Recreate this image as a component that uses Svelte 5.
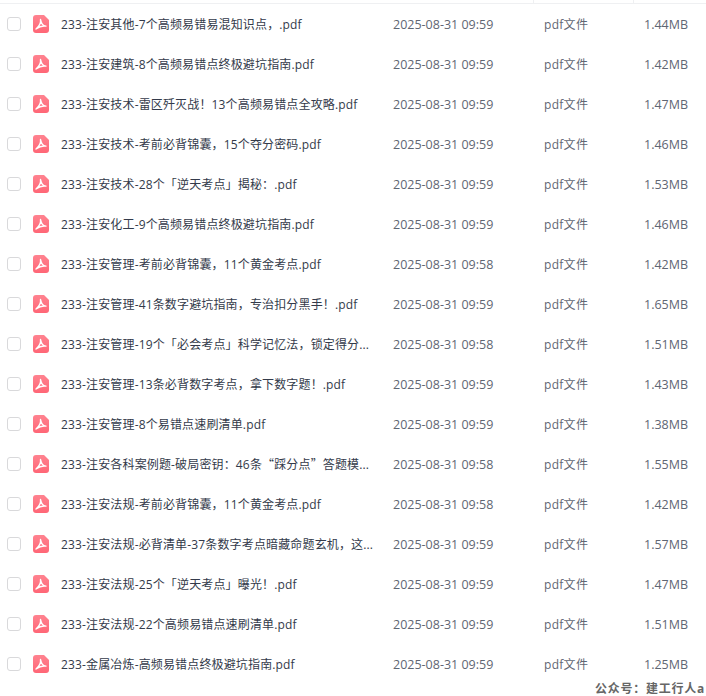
<script>
    // fullwidth punctuation kept as escapes so it can't get normalised to ascii
    const C = "\uFF0C";
    const B = "\uFF01";
    const M = "\uFF1A";
    const files = [
        [`233-注安其他-7个高频易错易混知识点${C}.pdf`, "09:59", "1.44MB"],
        ["233-注安建筑-8个高频易错点终极避坑指南.pdf", "09:59", "1.42MB"],
        [`233-注安技术-雷区歼灭战${B}13个高频易错点全攻略.pdf`, "09:59", "1.47MB"],
        [`233-注安技术-考前必背锦囊${C}15个夺分密码.pdf`, "09:59", "1.46MB"],
        [`233-注安技术-28个「逆天考点」揭秘${M}.pdf`, "09:59", "1.53MB"],
        ["233-注安化工-9个高频易错点终极避坑指南.pdf", "09:59", "1.46MB"],
        [`233-注安管理-考前必背锦囊${C}11个黄金考点.pdf`, "09:58", "1.42MB"],
        [`233-注安管理-41条数字避坑指南${C}专治扣分黑手${B}.pdf`, "09:59", "1.65MB"],
        [`233-注安管理-19个「必会考点」科学记忆法${C}锁定得分...`, "09:58", "1.51MB"],
        [`233-注安管理-13条必背数字考点${C}拿下数字题${B}.pdf`, "09:59", "1.43MB"],
        ["233-注安管理-8个易错点速刷清单.pdf", "09:59", "1.38MB"],
        [`233-注安各科案例题-破局密钥${M}46条|“|踩分点|”|答题模...`, "09:58", "1.55MB"],
        [`233-注安法规-考前必背锦囊${C}11个黄金考点.pdf`, "09:58", "1.42MB"],
        [`233-注安法规-必背清单-37条数字考点暗藏命题玄机${C}这...`, "09:59", "1.57MB"],
        [`233-注安法规-25个「逆天考点」曝光${B}.pdf`, "09:59", "1.47MB"],
        ["233-注安法规-22个高频易错点速刷清单.pdf", "09:59", "1.51MB"],
        ["233-金属冶炼-高频易错点终极避坑指南.pdf", "09:59", "1.25MB"],
    ];
</script>

<div class="page">
    <div class="head">
        <div class="head-a"></div>
        <div class="head-b"></div>
    </div>
    {#each files as file}
        <div class="row">
            <span class="check"></span>
            <svg class="icon" viewBox="0 0 16 18" width="16" height="18">
                <defs>
                    <linearGradient id="pdf-fill" x1="0" y1="0" x2="0" y2="1">
                        <stop offset="0" stop-color="#ff8390" />
                        <stop offset="1" stop-color="#ff6676" />
                    </linearGradient>
                </defs>
                <path d="M3 0H11L16 5V15a3 3 0 0 1-3 3H3a3 3 0 0 1-3-3V3a3 3 0 0 1 3-3z" fill="url(#pdf-fill)" />
                <path d="M7.500 4.500C8 8 6.500 11 3 14C5.500 12.200 9.500 10.500 13 11.200C10.500 11.200 8.500 9.500 7.500 4.500z" fill="none" stroke="#fff" stroke-width="1.300" stroke-linejoin="round" />
            </svg>
            <span class="name">
                {#each file[0].split("|") as part}
                    {#if part == "“" || part == "”"}<span class="quote">{part}</span>{:else}{part}{/if}
                {/each}
            </span>
            <span class="date">2025-08-31 {file[1]}</span>
            <span class="type">pdf文件</span>
            <span class="size">{file[2]}</span>
        </div>
    {/each}
    <div class="mark">公众号{M}建工行人a</div>
</div>

<style>
    :global(body) {
        margin: 0;
        background: #fff;
    }
    .page {
        width: 706px;
        height: 696px;
        overflow: hidden;
        position: relative;
        font-family: "Open Sans", "Noto Sans CJK SC", sans-serif;
        font-size: 12.500px;
        color: #5f6673;
    }
    .head {
        display: flex;
        height: 3px;
        border-bottom: 1px solid #eff0f2;
    }
    .head-a {
        width: 154px;
        margin-left: 379px;
        border-right: 1px solid #eff0f2;
    }
    .head-b {
        width: 99px;
        border-right: 1px solid #eff0f2;
    }
    .row {
        display: flex;
        align-items: center;
        height: 40px;
    }
    .check {
        box-sizing: border-box;
        width: 14px;
        height: 14px;
        margin-left: 7px;
        border: 1px solid #d9d9db;
        border-radius: 3px;
        flex: none;
    }
    .icon {
        margin-left: 12px;
        flex: none;
    }
    .name {
        width: 332px;
        margin-left: 12px;
        flex: none;
        white-space: nowrap;
        font-size: 12px;
        letter-spacing: 0.150px;
        color: #333a4a;
    }
    .quote {
        font-family: "Noto Sans CJK SC", sans-serif;
    }
    .date {
        width: 151px;
        flex: none;
        white-space: nowrap;
    }
    .type {
        width: 100px;
        flex: none;
        font-size: 12px;
        letter-spacing: 0.300px;
    }
    .size {
        flex: none;
    }
    .mark {
        position: absolute;
        right: 1px;
        bottom: 0;
        font-size: 12px;
        line-height: 14px;
        letter-spacing: 0.750px;
        font-weight: 700;
        color: #666;
    }
</style>
